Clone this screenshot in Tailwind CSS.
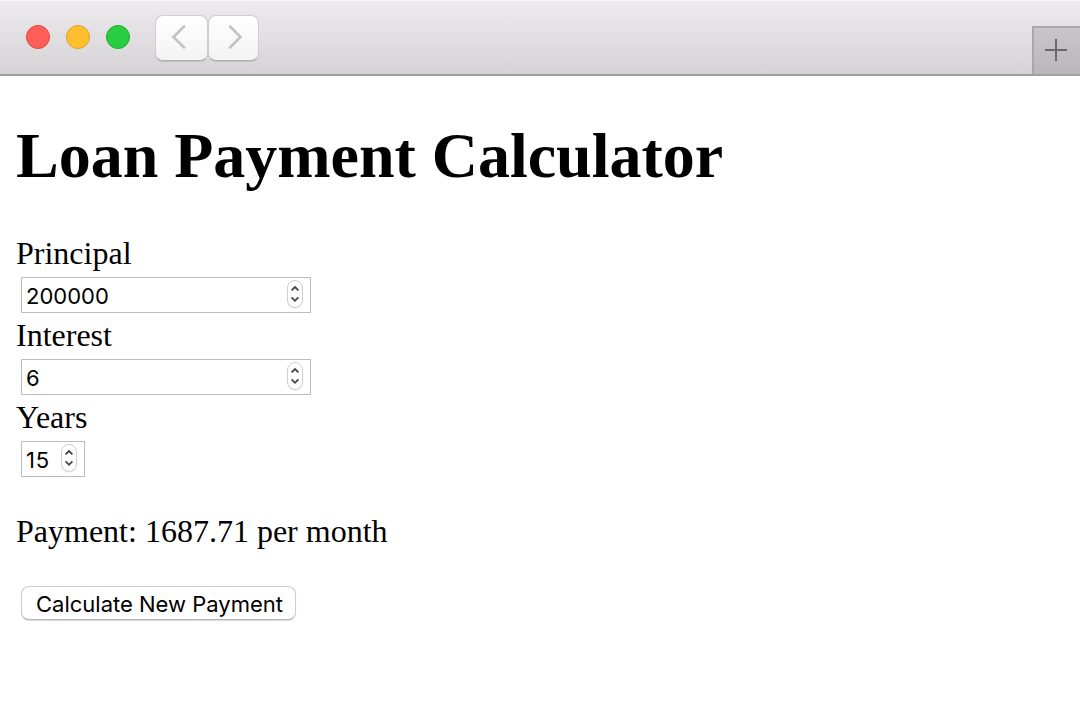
<!DOCTYPE html>
<html lang="en">
<head>
<meta charset="utf-8">
<title>Loan Payment Calculator</title>
<script src="https://cdn.jsdelivr.net/npm/@tailwindcss/browser@4"></script>
</head>
<body class="h-[720px] overflow-hidden bg-white text-black font-['Liberation_Serif',serif]">
<svg class="hidden">
  <symbol id="stepper" viewBox="0 0 20 32">
    <rect x="2.500" y="3" width="15" height="27.500" rx="7.500" fill="#000" opacity=".12"/>
    <rect x="2.500" y="2.500" width="15" height="27" rx="7.500" fill="#fff" stroke="#cfcfcf"/>
    <path d="M6.600 12.400 10 9l3.400 3.400M6.600 19.400l3.400 3.400 3.400-3.400" fill="none" stroke="#444" stroke-width="1.800"/>
  </symbol>
</svg>
<header class="flex h-[76px] justify-between border-b-2 border-[#a09ea0] bg-linear-to-b from-[#edebee] to-[#d5d3d5] shadow-[inset_0_1px_0_#f7f6f8]">
  <div class="flex pl-[26px]">
    <div class="mt-[25px] flex gap-4">
      <span class="size-6 rounded-full border border-[#e2463f] bg-[#ff5f58]"></span>
      <span class="size-6 rounded-full border border-[#dfa023] bg-[#ffbf2f]"></span>
      <span class="size-6 rounded-full border border-[#1dad2b] bg-[#29cd42]"></span>
    </div>
    <div class="mt-[15px] ml-[25px] flex">
      <button class="h-[46px] w-[53px] rounded-[8px] border border-[#cfcdcf] border-b-[#b0aeb0] bg-linear-to-b from-white to-[#f3f3f3] shadow-[0_1px_0_#c2c0c2]" aria-label="Back">
        <svg class="size-full" viewBox="0 0 51 44" fill="none" stroke="#c4c4c4" stroke-width="2.800" stroke-linecap="round"><path d="M28 10.500 17.500 21 28 31.500"/></svg>
      </button>
      <button class="h-[46px] w-[51px] rounded-[8px] border border-[#cfcdcf] border-b-[#b0aeb0] bg-linear-to-b from-white to-[#f3f3f3] shadow-[0_1px_0_#c2c0c2]" aria-label="Forward">
        <svg class="size-full" viewBox="0 0 49 44" fill="none" stroke="#c4c4c4" stroke-width="2.800" stroke-linecap="round"><path d="M21 10.500 31.500 21 21 31.500"/></svg>
      </button>
    </div>
  </div>
  <div class="mt-[26px] h-12 w-12 border-t-2 border-l-2 border-[#a9a7a9] bg-linear-to-b from-[#c8c6c9] to-[#b9b7b9]">
    <svg class="h-[46px] w-[46px]" viewBox="0 0 46 46" stroke="#6a686b" stroke-width="2"><path d="M11 22h22M22 11v22"/></svg>
  </div>
</header>
<main class="pt-[43px] pl-4">
  <h1 class="h-[116px] text-[64px] leading-[74px] font-bold tracking-[-0.02px] whitespace-nowrap">Loan Payment Calculator</h1>
  <div class="h-[82px]">
    <div class="h-[42px] text-[32px] leading-9">Principal</div>
    <div class="ml-[5px] flex h-9 w-[290px] items-center justify-between border border-[#bdbdbd] pr-[5px] pl-1 font-['Inter',sans-serif] text-[22px]"><span class="pt-0.5">200000</span><svg class="mb-0.5 h-8 w-5"><use href="#stepper"/></svg></div>
  </div>
  <div class="h-[82px]">
    <div class="h-[42px] text-[32px] leading-9">Interest</div>
    <div class="ml-[5px] flex h-9 w-[290px] items-center justify-between border border-[#bdbdbd] pr-[5px] pl-1 font-['Inter',sans-serif] text-[22px]"><span class="pt-0.5">6</span><svg class="mb-0.5 h-8 w-5"><use href="#stepper"/></svg></div>
  </div>
  <div class="h-[82px]">
    <div class="h-[42px] text-[32px] leading-9">Years</div>
    <div class="ml-[5px] flex h-9 w-16 items-center justify-between border border-[#bdbdbd] pr-[5px] pl-1 font-['Inter',sans-serif] text-[22px]"><span class="pt-0.5 tracking-[0.8px]">15</span><svg class="mb-0.5 h-8 w-5"><use href="#stepper"/></svg></div>
  </div>
  <p class="mt-8 h-[73px] text-[32px] leading-9">Payment: 1687.71 per month</p>
  <button class="ml-[5px] block h-[34px] w-[275px] rounded-[8px] border border-[#cdcdcd] border-b-[#b5b5b5] bg-white pt-px pl-0.5 font-['Inter',sans-serif] text-[22px] leading-8 whitespace-nowrap shadow-[0_1px_1px_rgba(0,0,0,0.15)]">Calculate New Payment</button>
</main>
</body>
</html>
